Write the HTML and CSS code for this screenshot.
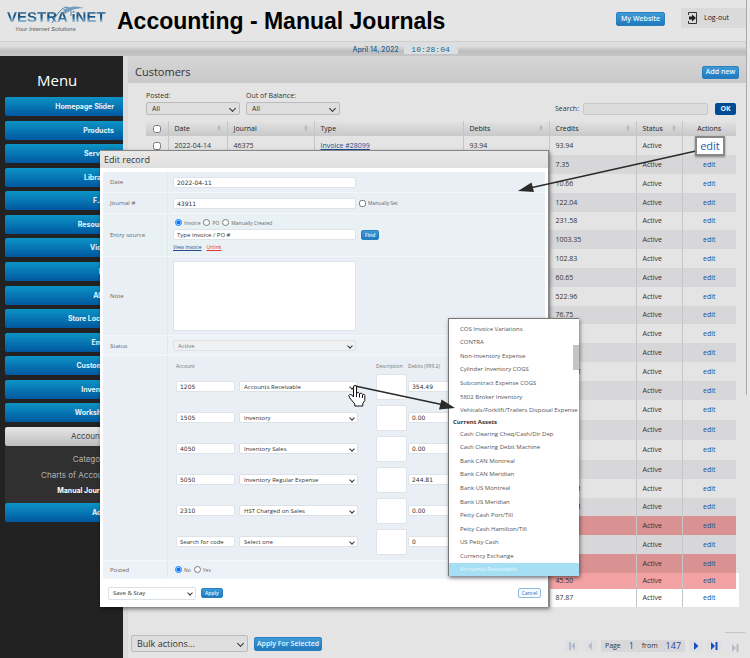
FILE: index.html
```html
<!DOCTYPE html>
<html lang="en">
<head>
<meta charset="utf-8">
<title>Accounting - Manual Journals</title>
<link rel="stylesheet" href="styles.css">
</head>
<body>
<svg width="0" height="0" class="defs" aria-hidden="true">
  <symbol id="sort" viewBox="0 0 5 7"><path d="M2.500 0 4.500 3H.5zM2.500 7 .5 4h4z"/></symbol>
  <symbol id="bar-prev" viewBox="0 0 8 8"><path d="M1 0h2v8H1zM7 0v8L3 4z"/></symbol>
  <symbol id="prev" viewBox="0 0 8 8"><path d="M6 0v8L2 4z"/></symbol>
  <symbol id="next" viewBox="0 0 8 8"><path d="M2 0l4.500 4L2 8z"/></symbol>
  <symbol id="bar-next" viewBox="0 0 8 8"><path d="M1 0l4 4-4 4zM5.500 0h2v8h-2z"/></symbol>
</svg>
<div class="page">
  <header class="top">
    <a class="logo" href="#"><span class="logo-name">VESTRA iNET</span><span class="logo-sub">Your Internet Solutions</span><svg class="swoosh" width="34" height="18" viewBox="0 0 34 18"><path d="M1 17Q8 3 15 1q6 0 5 9" fill="none" stroke="#4b82a8"/><path d="M12 4Q22-2 33 2 21 2 14 8z" fill="#6f9dbb"/></svg></a>
    <h1>Accounting - Manual Journals</h1>
    <button class="btn site">My Website</button>
    <a class="logout" href="#"><svg width="9" height="12" viewBox="0 0 9 12"><path d="M.5 3V.5h8v11h-8V9" fill="none" stroke="#333"/><path d="M1 4.500h3V2.500L8 6 4 9.500v-2H1z" fill="#222"/></svg>Log-out</a>
  </header>
  <div class="datebar"><span>April 14, 2022</span><time>10:28:04</time></div>

  <div class="body">
    <nav class="side">
      <h2>Menu</h2>
      <ul class="menu">
        <li><a href="#">Homepage Slider</a></li>
        <li><a href="#">Products</a></li>
        <li><a href="#">Services</a></li>
        <li><a href="#">Libraries</a></li>
        <li><a href="#">F.A.Q.</a></li>
        <li><a href="#">Resources</a></li>
        <li><a href="#">Videos</a></li>
        <li><a href="#">Blog</a></li>
        <li><a href="#">About</a></li>
        <li><a href="#">Store Locator</a></li>
        <li><a href="#">Emails</a></li>
        <li><a href="#">Customers</a></li>
        <li><a href="#">Inventory</a></li>
        <li><a href="#">Workshops</a></li>
        <li><a class="open" href="#">Accounting</a></li>
      </ul>
      <ul class="submenu">
        <li><a href="#">Categories</a></li>
        <li><a href="#">Charts of Accounts</a></li>
        <li><a class="current" href="#">Manual Journals</a></li>
      </ul>
      <ul class="menu-end">
        <li><a href="#">Admin</a></li>
      </ul>
    </nav>

    <main>
      <div class="title"><h2>Customers</h2><button class="btn add">Add new</button></div>
      <div class="content">
        <div class="filters">
          <div class="filter"><label for="posted">Posted:</label><span class="select"><select id="posted"><option>All</option></select></span></div>
          <div class="filter"><label for="oob">Out of Balance:</label><span class="select"><select id="oob"><option>All</option></select></span></div>
          <div class="search"><label for="q">Search:</label><input id="q" type="text"><button class="ok">OK</button></div>
        </div>
        <table class="journals">
          <colgroup><col class="c-check"><col class="c-date"><col class="c-journal"><col><col class="c-debit"><col class="c-credit"><col class="c-status"><col class="c-action"></colgroup>
          <thead><tr>
            <th><input type="checkbox" aria-label="Select all"></th>
            <th>Date<svg class="sort"><use href="#sort"/></svg></th>
            <th>Journal<svg class="sort"><use href="#sort"/></svg></th>
            <th>Type</th>
            <th>Debits<svg class="sort"><use href="#sort"/></svg></th>
            <th>Credits<svg class="sort"><use href="#sort"/></svg></th>
            <th>Status<svg class="sort"><use href="#sort"/></svg></th>
            <th>Actions</th>
          </tr></thead>
          <tbody>
            <tr><td><input type="checkbox" aria-label="Select journal 46375"></td><td>2022-04-14</td><td>46375</td><td><a class="doc" href="#">Invoice #28099</a></td><td>93.94</td><td>93.94</td><td>Active</td><td></td></tr>
            <tr><td></td><td></td><td></td><td></td><td></td><td>7.35</td><td>Active</td><td><a href="#">edit</a></td></tr>
            <tr><td></td><td></td><td></td><td></td><td></td><td>10.66</td><td>Active</td><td><a href="#">edit</a></td></tr>
            <tr><td></td><td></td><td></td><td></td><td></td><td>122.04</td><td>Active</td><td><a href="#">edit</a></td></tr>
            <tr><td></td><td></td><td></td><td></td><td></td><td>231.58</td><td>Active</td><td><a href="#">edit</a></td></tr>
            <tr><td></td><td></td><td></td><td></td><td></td><td>1003.35</td><td>Active</td><td><a href="#">edit</a></td></tr>
            <tr><td></td><td></td><td></td><td></td><td></td><td>102.83</td><td>Active</td><td><a href="#">edit</a></td></tr>
            <tr><td></td><td></td><td></td><td></td><td></td><td>60.65</td><td>Active</td><td><a href="#">edit</a></td></tr>
            <tr><td></td><td></td><td></td><td></td><td></td><td>522.96</td><td>Active</td><td><a href="#">edit</a></td></tr>
            <tr><td></td><td></td><td></td><td></td><td></td><td>76.75</td><td>Active</td><td><a href="#">edit</a></td></tr>
            <tr><td></td><td></td><td></td><td></td><td></td><td></td><td>Active</td><td><a href="#">edit</a></td></tr>
            <tr><td></td><td></td><td></td><td></td><td></td><td></td><td>Active</td><td><a href="#">edit</a></td></tr>
            <tr><td></td><td></td><td></td><td></td><td></td><td>1130.51</td><td>Active</td><td><a href="#">edit</a></td></tr>
            <tr><td></td><td></td><td></td><td></td><td></td><td></td><td>Active</td><td><a href="#">edit</a></td></tr>
            <tr class="tall"><td></td><td></td><td></td><td></td><td></td><td></td><td>Active</td><td><a href="#">edit</a></td></tr>
            <tr class="tall"><td></td><td></td><td></td><td></td><td></td><td></td><td>Active</td><td><a href="#">edit</a></td></tr>
            <tr class="tall"><td></td><td></td><td></td><td></td><td></td><td></td><td>Active</td><td><a href="#">edit</a></td></tr>
            <tr><td></td><td></td><td></td><td></td><td></td><td></td><td>Active</td><td><a href="#">edit</a></td></tr>
            <tr><td></td><td></td><td></td><td></td><td></td><td>1130.51</td><td>Active</td><td><a href="#">edit</a></td></tr>
            <tr><td></td><td></td><td></td><td></td><td></td><td>1130.51</td><td>Active</td><td><a href="#">edit</a></td></tr>
            <tr class="off"><td></td><td></td><td></td><td></td><td></td><td></td><td>Active</td><td><a href="#">edit</a></td></tr>
            <tr class="alt"><td></td><td></td><td></td><td></td><td></td><td></td><td>Active</td><td><a href="#">edit</a></td></tr>
            <tr class="off"><td></td><td></td><td></td><td></td><td></td><td></td><td>Active</td><td><a href="#">edit</a></td></tr>
            <tr class="off bright short"><td></td><td></td><td></td><td></td><td></td><td>45.50</td><td>Active</td><td><a href="#">edit</a></td></tr>
            <tr class="plain bright"><td></td><td></td><td></td><td></td><td></td><td>87.87</td><td>Active</td><td><a href="#">edit</a></td></tr>
          </tbody>
        </table>
      </div>
      <div class="bulk">
        <span class="select"><select aria-label="Bulk actions"><option>Bulk actions...</option></select></span>
        <button class="btn apply-all">Apply For Selected</button>
        <div class="pager">
          <button class="dim" aria-label="First"><svg><use href="#bar-prev"/></svg></button>
          <button class="dim" aria-label="Previous"><svg><use href="#prev"/></svg></button>
          <span class="pages">Page <b>1</b> from <b>147</b></span>
          <button aria-label="Next"><svg><use href="#next"/></svg></button>
          <button aria-label="Last"><svg><use href="#bar-next"/></svg></button>
          <span class="ghost"><svg><use href="#bar-next"/></svg></span>
        </div>
      </div>
    </main>
  </div>
  <div class="scroll"></div>

  <section class="modal" role="dialog" aria-labelledby="edit-title">
    <h3 id="edit-title">Edit record</h3>
    <form class="form">
      <div class="row"><label for="date">Date</label><div class="val"><input class="wide num" id="date" type="text" value="2022-04-11"></div></div>
      <div class="row"><label for="journal">Journal #</label><div class="val line"><input class="wide num" id="journal" type="text" value="43911"><label class="opt"><input type="checkbox">Manually Set</label></div></div>
      <div class="row source"><label for="src">Entry source</label><div class="val">
        <div class="radios"><label class="opt"><input type="radio" name="src" checked>Invoice</label><label class="opt"><input type="radio" name="src">PO</label><label class="opt"><input type="radio" name="src">Manually Created</label></div>
        <div class="line"><input class="wide" id="src" type="text" value="Type invoice / PO #"><button type="button" class="btn mini">Find</button></div>
        <div class="links"><a href="#">View invoice</a><a class="red" href="#">Unlink</a></div>
      </div></div>
      <div class="row note"><label for="note">Note</label><div class="val"><textarea class="wide" id="note"></textarea></div></div>
      <div class="row status"><label for="status">Status</label><div class="val"><span class="select wide"><select id="status"><option>Active</option></select></span></div></div>
      <div class="row accounts"><span></span><div class="val">
        <div class="line heads"><span class="code">Account</span><span class="acct"></span><span class="desc">Description</span><span>Debits (999.2)</span></div>
        <div class="line entry"><input class="code num" type="text" aria-label="Code" value="1205"><span class="select acct"><select aria-label="Account"><option>Accounts Receivable</option></select></span><textarea class="desc" aria-label="Description"></textarea><input class="debit num" type="text" aria-label="Debit" value="354.49"></div>
        <div class="line entry"><input class="code num" type="text" aria-label="Code" value="1505"><span class="select acct"><select aria-label="Account"><option>Inventory</option></select></span><textarea class="desc" aria-label="Description"></textarea><input class="debit num" type="text" aria-label="Debit" value="0.00"></div>
        <div class="line entry"><input class="code num" type="text" aria-label="Code" value="4050"><span class="select acct"><select aria-label="Account"><option>Inventory Sales</option></select></span><textarea class="desc" aria-label="Description"></textarea><input class="debit num" type="text" aria-label="Debit" value="0.00"></div>
        <div class="line entry"><input class="code num" type="text" aria-label="Code" value="5050"><span class="select acct"><select aria-label="Account"><option>Inventory Regular Expense</option></select></span><textarea class="desc" aria-label="Description"></textarea><input class="debit num" type="text" aria-label="Debit" value="244.81"></div>
        <div class="line entry"><input class="code num" type="text" aria-label="Code" value="2310"><span class="select acct"><select aria-label="Account"><option>HST Charged on Sales</option></select></span><textarea class="desc" aria-label="Description"></textarea><input class="debit num" type="text" aria-label="Debit" value="0.00"></div>
        <div class="line entry"><input class="code" type="text" aria-label="Code" value="Search for code"><span class="select acct"><select aria-label="Account"><option>Select one</option></select></span><textarea class="desc" aria-label="Description"></textarea><input class="debit num" type="text" aria-label="Debit" value="0"></div>
      </div></div>
      <div class="row posted"><span class="name">Posted</span><div class="val radios"><label class="opt"><input type="radio" name="posted" checked>No</label><label class="opt"><input type="radio" name="posted">Yes</label></div></div>
    </form>
    <footer>
      <span class="select"><select aria-label="After saving"><option>Save &amp; Stay</option></select></span>
      <button class="btn mini">Apply</button>
      <button class="cancel">Cancel</button>
    </footer>
  </section>

  <ul class="options" role="listbox" aria-label="Accounts">
    <li>COS Invoice Variations</li>
    <li>CONTRA</li>
    <li>Non-Inventory Expense</li>
    <li>Cylinder Inventory COGS</li>
    <li>Subcontract Expense COGS</li>
    <li>5802 Broker Inventory</li>
    <li>Vehicals/Forklift/Trailers Disposal Expense</li>
    <li class="group">Current Assets</li>
    <li>Cash Clearing Cheq/Cash/Dir Dep</li>
    <li>Cash Clearing Debit Machine</li>
    <li>Bank CAN Montreal</li>
    <li>Bank CAN Meridian</li>
    <li>Bank US Montreal</li>
    <li>Bank US Meridian</li>
    <li>Petty Cash Port/Till</li>
    <li>Petty Cash Hamilton/Till</li>
    <li>US Petty Cash</li>
    <li>Currency Exchange</li>
    <li class="on">Accounts Receivable</li>
  </ul>

  <svg class="marks" width="750" height="658" viewBox="0 0 750 658" aria-hidden="true">
    <g fill="#2b2b2b" stroke="#2b2b2b">
      <path d="M696 151 530 188M355 386 444 405" stroke-width="1.500" fill="none"/>
      <path d="M518 191 531.500 182.500 534 192z" stroke="none"/>
      <path d="M455 408 439 409.500 441.500 399.500z" stroke="none"/>
    </g>
    <path d="M353.500 387q0-1.500 1.500-1.500t1.500 1.500v6q2-1.500 3 .5 2-1 3 .8 2-.5 2.300 1.200v5l-2 3v2.500h-8v-2l-5-6q-2-3 0-3.500t3.700 2.500z" fill="#fff" stroke="#111"/>
    <path d="M356.500 393v4M359.500 394v3.500M362.500 395v3" stroke="#111" fill="none"/>
  </svg>
  <a class="callout" href="#">edit</a>
</div>
</body>
</html>
```
FILE: styles.css
```css
* { box-sizing: border-box; }
body { margin: 0; font: 7px/10px "Open Sans", "Noto Sans", sans-serif; color: #333; background: #e4e4e4; }
h1, h2, h3, ul { margin: 0; padding: 0; font-weight: 400; list-style: none; }
a { color: #1d4f91; text-decoration: none; }
input, select, textarea, button { font: inherit; color: inherit; margin: 0; padding: 0; border-radius: 2px; }
input[type="text"], textarea { border: 1px solid #dde3e8; background: #fff; padding: 0 3px; min-width: 0; display: block; resize: none; }
input[type="checkbox"], input[type="radio"] { width: 8px; height: 8px; }
button { border: 0; cursor: pointer; }
.defs { position: absolute; }
.page { position: relative; min-height: 100vh; overflow: hidden; display: flex; flex-direction: column; }

.select { position: relative; display: block; }
.select select { appearance: none; display: block; width: 100%; height: 100%; border: 1px solid #bbb; background: #dedede; padding: 0 5px; }
.select::after { content: ""; position: absolute; right: 5px; top: calc(50% - 3px); width: 4px; height: 4px; border: solid #333; border-width: 0 1px 1px 0; transform: rotate(45deg); pointer-events: none; }
.btn { background: linear-gradient(#3f9ad6, #1f79bd); color: #eaf6ff; border: 1px solid #2a7fbe; font-weight: 600; line-height: 10px; white-space: nowrap; }

.top { display: flex; align-items: flex-start; height: 42px; padding-right: 4px; border-bottom: 1px solid #cfcfcf; background: #e5e5e5; }
.logo { position: relative; display: flex; flex-direction: column; width: 109px; margin-right: 8px; padding: 8px 0 0 7px; }
.logo-name { font: 700 15px/17px "Liberation Sans", sans-serif; white-space: nowrap; color: transparent; background: linear-gradient(#6d9cbd 15%, #174a75 45%, #2370a3 60%, #8fb2c9 80%); background-clip: text; }
.logo-sub { padding-left: 8px; font: italic 6px/8px "Liberation Sans", sans-serif; color: #555; white-space: nowrap; }
.swoosh { position: absolute; left: 51px; top: 6px; }
h1 { flex: 1; padding-top: 7px; font: 700 23px/28px "Liberation Sans", sans-serif; color: #000; white-space: nowrap; }
.site { width: 49px; height: 14px; margin: 12px 16px 0 0; }
.logout { display: flex; align-items: center; gap: 7px; width: 65px; height: 20px; margin-top: 8px; padding-left: 7px; background: #dadada; color: #222; }
.datebar { display: flex; justify-content: center; align-items: center; gap: 5px; height: 14px; padding-left: 60px; background: linear-gradient(#dedede 30%, #bdbdbd 65%, #c6c6c6); font: 500 7px/9px Inter, sans-serif; color: #1f6391; }
.datebar time { width: 54px; background: #dcdfe1; font: 400 8px/9px "Liberation Mono", monospace; text-align: center; }

.body { display: flex; flex: 1; }
.side { flex: none; width: 123px; background: #222; padding-left: 5px; }
.side h2 { padding: 12px 0 0 32px; font-size: 15px; line-height: 24px; height: 41px; color: #fff; }
.menu { display: grid; grid-auto-rows: 19px; align-content: space-between; min-height: 349px; }
.menu a, .menu-end a { display: block; height: 19px; padding-right: 9px; border-radius: 2px 0 0 2px; background: linear-gradient(#0d94c6, #0058a0); color: #e6f3fa; font: 700 7px/19px Inter, sans-serif; text-align: right; }
.menu .open { background: linear-gradient(#e6e6e6, #bdbdbd); color: #444; font-weight: 400; font-size: 8px; }
.submenu { padding: 5px 9px 4px 0; background: #303030; }
.submenu a { display: block; color: #b5b5b5; font: 400 8px/16px Inter, sans-serif; text-align: right; }
.submenu .current { color: #fff; font-weight: 700; font-size: 7px; }

main { flex: 1; min-width: 0; border-left: 5px solid #dcdcdc; padding-right: 4px; }
.title { display: flex; align-items: center; justify-content: space-between; height: 27px; padding: 5px 7px 0; background: linear-gradient(#d6d6d6, #c9c9c9); }
.title h2 { font-size: 11px; line-height: 14px; }
.add { width: 37px; height: 13px; }
.content { padding: 8px 10px 0 18px; }
.filters { display: flex; gap: 6px; align-items: flex-end; margin-bottom: 6px; }
.filter { width: 94px; }
.filter .select { height: 13px; margin-top: 1px; }
.filter label { display: block; }
.search { display: flex; align-items: center; gap: 4px; margin-left: auto; }
.search input { width: 125px; height: 12px; background: #dcdcdc; border-color: #c8c8c8; }
.ok { width: 21px; height: 12px; margin-left: 3px; background: #004c94; color: #e3eefa; font-weight: 700; }

.journals { width: 100%; table-layout: fixed; border-collapse: collapse; }
.journals th, .journals td { padding: 0 6px; border-right: 1px solid #c6c6c9; text-align: left; font-weight: 400; white-space: nowrap; }
.journals th { height: 15px; background: linear-gradient(#e3e3e3, #c8c8c8); color: #222; }
.journals td { height: 19px; }
.journals tr:nth-child(5n) td { height: 18px; }
.journals .tall td, .journals tr.tall:nth-child(5n) td { height: 20px; }
.journals .short td { height: 16px; }
.journals tr > :last-child { text-align: center; border-right: 0; }
.journals tr > :first-child { text-align: center; }
.journals input { display: block; margin: auto; }
.journals tbody tr:nth-child(even), .journals tbody .alt { background: #d7d7d9; }
.journals tbody .off { background: #d99192; }
.journals tbody .plain { background: #fff; }
.journals tbody .off.bright { background: #f2a2a3; }
.journals .bright td:last-child { box-shadow: 3px 0 0 #fff; }
.journals .doc { text-decoration: underline; }
.sort { float: right; width: 4px; height: 6px; margin-top: 1px; fill: #aaa; }
.c-check { width: 22px; } .c-date { width: 59px; } .c-journal { width: 87px; } .c-debit { width: 86px; } .c-credit { width: 87px; } .c-status { width: 46px; } .c-action { width: 54px; }

.bulk { display: flex; align-items: center; gap: 6px; padding: 21px 1px 0 3px; }
.bulk > .select { width: 117px; height: 17px; font-size: 9px; }
.apply-all { width: 68px; height: 14px; }
.pager { display: flex; align-items: center; gap: 4px; margin-left: auto; padding-top: 4px; }
.pager button { width: 14px; height: 12px; background: #e0e0e3; display: flex; align-items: center; justify-content: center; }
.pager svg { width: 8px; height: 8px; fill: #1650c0; }
.pager .dim svg, .ghost svg { fill: #b3bccb; }
.pages { display: flex; justify-content: space-around; width: 84px; background: #d8d8da; line-height: 12px; }
.pages b { font-weight: 400; font-size: 9px; color: #1c4a90; }
.ghost { width: 20px; height: 27px; padding: 11px 4px 0; border-top: 1px solid #c4c4c4; text-align: center; }
.scroll { position: absolute; right: 0; top: 0; width: 4px; height: 60%; border-left: 1px solid #aaa; background: #e9e9e9; }

.modal { position: absolute; left: 100px; right: 201px; top: 150px; border: solid #858585; border-width: 1px 1px 0 0; background: #fff; box-shadow: 1px 2px 4px rgba(0,0,0,.5); font-size: 6px; line-height: 8px; }
.modal h3 { height: 17px; padding-left: 4px; background: linear-gradient(#e9e9e9, #dfdfdf); font-size: 9px; line-height: 17px; }
.form { margin: 4px 3px 0 3px; }
.row { display: grid; grid-template-columns: 64px 1fr; min-height: 21px; align-items: center; border-bottom: 1px solid #f3f7fa; background: #e9eff4; }
.row > label, .row .name { padding-left: 7px; font-size: 6px; color: #666; }
.val { align-self: stretch; display: flex; flex-direction: column; justify-content: center; padding-left: 5px; border-left: 1px solid #e1e8ee; }
.val.line, .line { display: flex; flex-direction: row; align-items: center; justify-content: flex-start; }
.wide { width: 183px; height: 11px; }
.num { font-family: "DejaVu Sans", sans-serif; }
.opt { display: flex; align-items: center; gap: 2px; font-size: 5px; color: #666; }
.line > .opt { margin-left: 3px; }
.opt input { width: 7px; height: 7px; }
.source { min-height: 43px; background: #e9f1f5; }
.radios, .val.radios { display: flex; flex-direction: row; justify-content: flex-start; gap: 3px; align-items: center; padding-left: 2px; }
.val.radios { padding-left: 7px; }
.source .radios { height: 13px; }
.mini { height: 10px; margin-left: 5px; padding: 0 3px; font-size: 5px; line-height: 8px; }
.links { display: flex; gap: 5px; height: 14px; align-items: center; font-size: 5px; }
.links a { text-decoration: underline; }
.links .red { color: #e33; }
.note { min-height: 79px; }
textarea.wide { height: 70px; }
.status { min-height: 20px; background: #edf2f7; }
.modal .select select { border-color: #dce1e6; background: #fff; padding: 0 4px; }
.modal .status select { background: #eff1f3; color: #777; }
.modal .select::after { width: 3px; height: 3px; right: 4px; top: calc(50% - 2px); }
.accounts { min-height: 205px; }
.accounts .val { justify-content: flex-start; padding: 4px 0 0 8px; overflow: hidden; }
.heads { height: 11px; font-size: 5px; color: #777; }
.entry { height: 31px; align-items: center; }
.code { width: 59px; height: 11px; }
.heads .code, .heads .acct { height: auto; }
.acct { width: 119px; height: 11px; margin: 0 18px 0 4px; }
.desc { width: 31px; margin-right: 1px; white-space: nowrap; }
textarea.desc { height: 26px; }
.debit { flex: 1; height: 11px; }
.posted { min-height: 18px; background: #edf2f8; }
.modal footer { display: flex; align-items: center; height: 28px; padding: 0 7px 0 8px; }
.modal footer .select { width: 88px; height: 13px; }
.cancel { margin-left: auto; height: 10px; width: 23px; border: 1px solid #8fbbe2; background: #f5faff; color: #2a6fb0; font-size: 5px; line-height: 8px; }

.options { position: absolute; left: 448px; top: 318px; width: 131px; height: 258px; display: flex; flex-direction: column; padding-top: 3px; overflow: hidden; border: solid #777; border-width: 1px 0 0 1px; background: #fff; box-shadow: 1px 2px 4px rgba(0,0,0,.5); font-size: 6px; color: #555; white-space: nowrap; }
.options::after { content: ""; position: absolute; right: 0; top: 26px; width: 6px; height: 25px; background: #c4c4c4; }
.options li { flex: 1 1 0; display: flex; align-items: center; padding-left: 11px; }
.options .group { flex: 0 0 10px; padding-left: 4px; font-weight: 700; color: #333; }
.options .on { background: #a6def3; color: #e6f8ff; }
.marks { position: absolute; left: 0; top: 0; pointer-events: none; }
.callout { position: absolute; left: 695px; top: 136px; width: 30px; height: 20px; border: 2px solid #888; background: #fff; box-shadow: 0 1px 2px rgba(0,0,0,.4); font-size: 11px; line-height: 16px; text-align: center; color: #1d5ba8; }
```
